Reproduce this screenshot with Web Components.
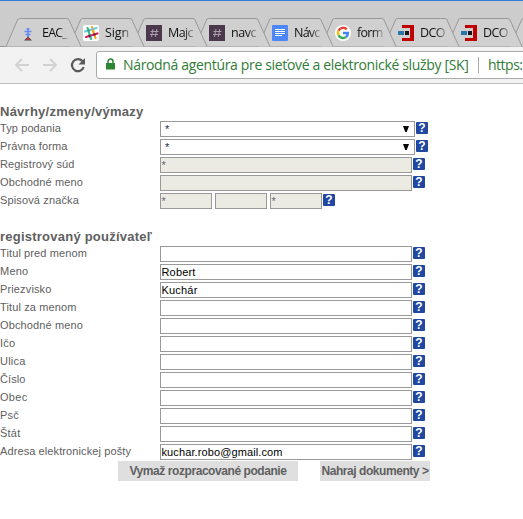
<!DOCTYPE html>
<html lang="sk"><head><meta charset="utf-8"><title>Návrhy</title>
<style>html,body{margin:0;background:#fff;overflow:hidden;width:523px;height:519px;font-family:"Liberation Sans",Arial,sans-serif}</style></head>
<body><app-page></app-page>
<script>
function define(name, html, init){
  const t=document.createElement('template'); t.innerHTML=html;
  customElements.define(name, class extends HTMLElement{
    connectedCallback(){
      if(this.shadowRoot) return;
      const r=this.attachShadow({mode:'open'});
      const f=document.importNode(t.content,true);
      if(init) init(this,f);
      r.appendChild(f);
    }
  });
}
// Text whose tracking is adjusted so that it spans the width given in "w".
customElements.define('fit-text', class extends HTMLElement{
  connectedCallback(){
    if(this.shadowRoot) return;
    const r=this.attachShadow({mode:'open'});
    r.innerHTML='<style>:host{display:inline-block;white-space:pre}span{display:inline-block}</style><span></span>';
    const s=r.querySelector('span'), t=this.getAttribute('text'), w=+this.getAttribute('w');
    s.textContent=t;
    if(w) s.style.letterSpacing=((w-s.getBoundingClientRect().width)/t.length).toFixed(3)+'px';
  }
});
const icons={
 tower:'<path d="M8 3v9M4.500 6.500h7M5.500 9.500h5M6.500 4h3" stroke="#6688f2" stroke-width="1.500"/><path d="M8 11.500l4 4H4z" fill="#444"/><path d="M8 12.500l2.500 2H5.500z" fill="#e33a35"/>',
 slack:'<rect width="16" height="16" rx="2" fill="#fff"/><g stroke-width="2.200" stroke-linecap="round"><path d="M4.500 3l3.500 11" stroke="#3eb890"/><path d="M9 2l3.500 11" stroke="#e9a820"/><path d="M2 6.500l11.500-3.500" stroke="#70cadb"/><path d="M3 12l11.500-3.500" stroke="#e01765"/></g><path d="M5 4.500l1 2M6.500 9.500l1 3" stroke="#2a9d78" stroke-width="2"/><path d="M9.500 4.500l1 3" stroke="#e9a820" stroke-width="2"/><path d="M5.500 11.200l2-.6M10.500 9.700l2-.6" stroke="#5b2638" stroke-width="2"/>',
 hash:'<rect width="16" height="16" fill="#4b384c"/><path d="M7 4L5.500 12M10.800 4L9.300 12M4.500 6.500h8M4 9.500h8" stroke="#aa9fab" stroke-width="1"/>',
 docs:'<rect width="16" height="16" rx="1" fill="#4d86f7"/><path d="M3 4.500h10M3 6.500h10M3 8.500h10M3 10.500h7" stroke="#fff"/>',
 google:'<circle cx="8" cy="8" r="8" fill="#fff"/><g fill="none" stroke-width="2.400"><path d="M11.700 4.300A5 5 0 0 0 3.500 5.800" stroke="#ea4335"/><path d="M3.500 5.800a5 5 0 0 0 0 4.400" stroke="#fbbc05"/><path d="M3.500 10.200a5 5 0 0 0 7.700 1.600" stroke="#34a853"/><path d="M11.200 11.800A5 5 0 0 0 12.900 8H8" stroke="#4285f4"/></g>',
 dco:'<path d="M4 0h12v16H4v-3h8V3H4z" fill="#c00000"/><path d="M0 6h6v4H0z" fill="#2775aa"/><path d="M7 6h4v4H7z" fill="#171717"/>'
};
define('browser-tab',`<style>
:host{display:block;flex:0 0 63px;height:28px;position:relative}
.edge{position:absolute;left:0;top:0;overflow:visible}
.c{position:relative;display:flex;align-items:center;height:30px;padding-left:14px;gap:6px}
.c svg{width:16px;height:16px;flex:none}
.t{width:27px;font:12.500px/20px "Open Sans","Noto Sans",sans-serif;color:#111;white-space:nowrap;-webkit-mask-image:linear-gradient(90deg,#000 60%,rgba(0,0,0,.15));mask-image:linear-gradient(90deg,#000 60%,rgba(0,0,0,.15))}
</style><svg class="edge" width="75" height="29"><path d="M0 28.500L11.500 2Q12 .5 13.500 .5H61Q62.500 .5 63 2L75 28.500" fill="#d0d0d0" stroke="#999"/></svg>
<div class="c"><svg viewBox="0 0 16 16" fill="none"></svg><div class="t"><fit-text></fit-text></div></div>`,
(h,f)=>{f.querySelector('.c svg').innerHTML=icons[h.getAttribute('icon')]||'';const x=f.querySelector('fit-text');x.setAttribute('text',h.getAttribute('label'));x.setAttribute('w',h.getAttribute('w'))});
define('tab-strip',`<style>
:host{display:flex;height:47px;box-sizing:border-box;background:#ccc;border-top:1px solid #2f7ed8;box-shadow:inset 0 -1px #999;padding:17px 0 0 6px;overflow:hidden}
browser-tab:nth-of-type(1){z-index:9}browser-tab:nth-of-type(2){z-index:8}browser-tab:nth-of-type(3){z-index:7}browser-tab:nth-of-type(4){z-index:6}browser-tab:nth-of-type(5){z-index:5}browser-tab:nth-of-type(6){z-index:4}browser-tab:nth-of-type(7){z-index:3}browser-tab:nth-of-type(8){z-index:2}
</style>
<browser-tab icon="tower" label="EAC_" w="25"></browser-tab><browser-tab icon="slack" label="Sign" w="24"></browser-tab><browser-tab icon="hash" label="Majc" w="25"></browser-tab><browser-tab icon="hash" label="navc" w="25"></browser-tab><browser-tab icon="docs" label="Návc" w="25.500"></browser-tab><browser-tab icon="google" label="form" w="25.500"></browser-tab><browser-tab icon="dco" label="DCO" w="25"></browser-tab><browser-tab icon="dco" label="DCO" w="25"></browser-tab><browser-tab icon="none" label="" w="0"></browser-tab>`);
define('address-bar',`<style>
:host{display:flex;box-sizing:border-box;height:37px;background:#f2f2f2;border-bottom:1px solid #bbb;padding:4px 0 4px 14px;align-items:center;overflow:hidden}
.nav{display:block;width:82px;height:28px;flex:none}
.box{display:flex;align-items:center;box-sizing:border-box;flex:none;width:440px;height:28px;border:1px solid #aaa;border-radius:3px;background:#fff;padding-left:9px;font:14px/24px "Open Sans","Noto Sans",sans-serif;color:#317b36}
.lock{width:9px;height:12px;margin-right:8px;flex:none;margin-top:-2px}
i{width:1px;height:16px;background:#aaa;margin:0 9px 0 9.500px;flex:none}
</style><svg class="nav" fill="none"><g stroke="#d2d2d2" stroke-width="2"><path d="M15 14H2M8 8L2 14l6 6M29 14h13M36 8l6 6-6 6"/></g><path d="M68.500 10.200A6 6 0 1 0 69.700 16" stroke="#5a5a5a" stroke-width="2.200"/><path d="M71 7v6.500h-6.500z" fill="#5a5a5a"/></svg>
<div class="box"><svg class="lock" viewBox="0 0 9 12" fill="none"><path d="M0 5h9v6.500H0z" fill="#2e8534"/><path d="M2 6V3.500a2.500 2.500 0 0 1 5 0V6" stroke="#2e8534" stroke-width="1.500"/></svg><fit-text text="Národná agentúra pre sieťové a elektronické služby [SK]" w="345.500"></fit-text><i></i><fit-text text="https:" w="34.500"></fit-text></div>`);
define('help-icon',`<style>:host{display:block;flex:none;width:12px;height:12px;background:#2148a0;border-radius:1px;color:#fff;font:bold 12px/12px "Liberation Sans",Arial,sans-serif;text-align:center}</style>?`);
define('text-box',`<style>:host{display:flex;align-items:center;flex:none;box-sizing:border-box;height:16px;border:1px solid #999;background:#fff;font-size:11px;line-height:13px;color:#000;padding:1px 0 0 .5px}
:host([off]){background:#ebebe4;color:#667}:host([select]){padding:1px 5px 0 4px;justify-content:space-between;color:#1d2a48}svg{display:none;width:6px;height:6px;margin-top:-2px}:host([select]) svg{display:block}</style><fit-text></fit-text><svg viewBox="0 0 6 6"><path d="M0 0h6L3.700 6H2.300z" fill="#000"/></svg>`,
(h,f)=>{h.style.width=h.getAttribute('width')+'px';const x=f.querySelector('fit-text');x.setAttribute('text',h.getAttribute('value')||'');x.setAttribute('w',h.getAttribute('w')||0)});
define('form-row',`<style>:host{display:flex;height:18px;align-items:flex-start}.l{width:160px;flex:none;font-size:11px;line-height:14px;color:#606060}.f{display:flex;gap:3px}help-icon{margin:1px 0 0 1px}</style><div class="l"><fit-text></fit-text></div><div class="f"><slot></slot></div><help-icon></help-icon>`,
(h,f)=>{const x=f.querySelector('fit-text');x.setAttribute('text',h.getAttribute('label'));x.setAttribute('w',h.getAttribute('w'))});
define('form-section',`<style>:host{display:block}h2{margin:0;height:17px;font:bold 13px/16px "Liberation Sans",Arial,sans-serif;color:#606060}</style><h2><fit-text></fit-text></h2><slot></slot>`,
(h,f)=>{const x=f.querySelector('fit-text');x.setAttribute('text',h.getAttribute('label'));x.setAttribute('w',h.getAttribute('w'))});
define('action-button',`<style>:host{display:flex;box-sizing:border-box;height:20px;justify-content:center;background:#dfdfdf;color:#606060;font:bold 12px/20px "Liberation Sans",Arial,sans-serif}</style><fit-text></fit-text>`,
(h,f)=>{h.style.width=h.getAttribute('width')+'px';const x=f.querySelector('fit-text');x.setAttribute('text',h.getAttribute('label'));x.setAttribute('w',h.getAttribute('w'))});
const row=(l,w)=>`<form-row label="${l}" w="${w}"><text-box width="252"></text-box></form-row>`;
define('app-page',`<style>:host{display:block}main{padding-top:20px}.two{margin-top:18px}.actions{display:flex;gap:22px;padding-left:118px;margin-top:-1px}</style>
<tab-strip></tab-strip><address-bar></address-bar>
<main><form-section label="Návrhy/zmeny/výmazy" w="143.500">
<form-row label="Typ podania" w="61"><text-box select width="255" value="*"></text-box></form-row>
<form-row label="Právna forma" w="67.500"><text-box select width="255" value="*"></text-box></form-row>
<form-row label="Registrový súd" w="74.500"><text-box off width="252" value="*"></text-box></form-row>
<form-row label="Obchodné meno" w="83"><text-box off width="252"></text-box></form-row>
<form-row label="Spisová značka" w="79"><text-box off width="52" value="*"></text-box><text-box off width="52"></text-box><text-box off width="52" value="*"></text-box></form-row>
</form-section>
<form-section class="two" label="registrovaný používateľ" w="152">
${row('Titul pred menom',87)}${row('Meno',28.5)}${row('Priezvisko',51.5)}${row('Titul za menom',76.5)}${row('Obchodné meno',83)}${row('Ičo',15.5)}${row('Ulica',25.5)}${row('Číslo',25.5)}${row('Obec',27.5)}${row('Psč',19)}${row('Štát',20.5)}${row('Adresa elektronickej pošty',131)}
</form-section>
<div class="actions"><action-button width="180" label="Vymaž rozpracované podanie" w="157"></action-button><action-button width="110" label="Nahraj dokumenty &gt;" w="107"></action-button></div></main>`,
(h,f)=>{for(const [l,v,w] of [['Meno','Robert',34],['Priezvisko','Kuchár',36],['Adresa elektronickej pošty','kuchar.robo@gmail.com',121]]){const b=f.querySelector(`form-row[label="${l}"] text-box`);b.setAttribute('value',v);b.setAttribute('w',w)}});
</script></body></html>
